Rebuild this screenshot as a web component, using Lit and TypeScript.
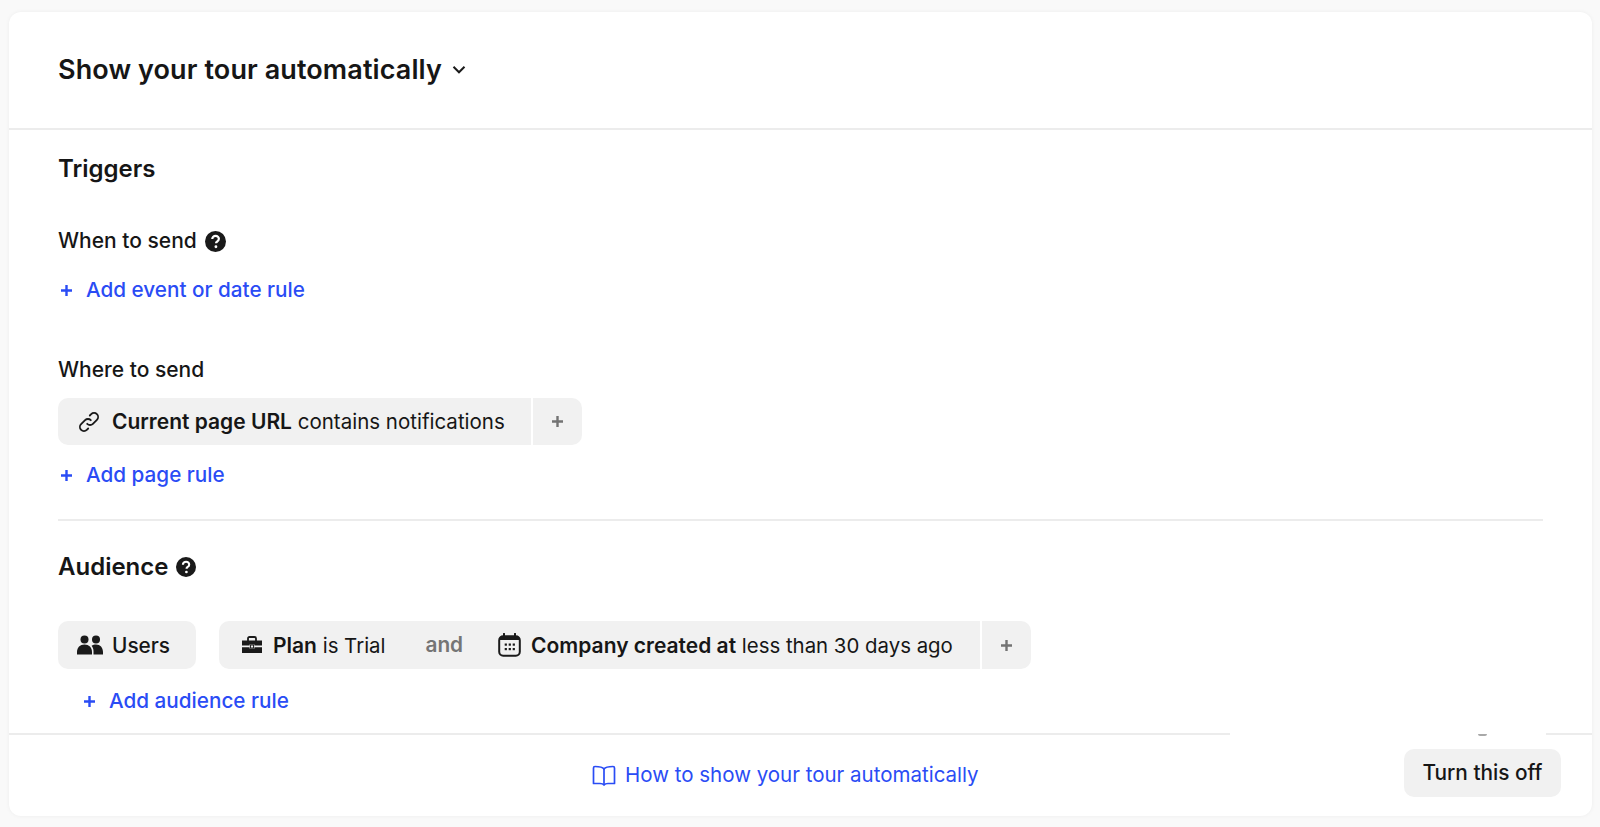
import { LitElement, html, css, svg } from "lit";
import { customElement } from "lit/decorators.js";

const help = (size: number) => html`<svg class="help" width=${size} height=${size} viewBox="0 0 20 20" aria-hidden="true">
  <circle cx="10" cy="10" r="10" fill="#1a1a1a"></circle>
  <path d="M6.900 7.700c0-1.900 1.400-3 3.200-3s3.100 1.100 3.100 2.700c0 1.200-.6 1.900-1.600 2.600-.8.500-1.100.9-1.100 1.700" fill="none" stroke="#fff" stroke-width="2.100"></path>
  <circle cx="10.400" cy="15" r="1.350" fill="#fff"></circle>
</svg>`;

const plus = html`<svg class="plus" width="13" height="13" viewBox="0 0 13 13" aria-hidden="true">
  <path d="M6.500 1v11M1 6.500h11" fill="none" stroke="currentColor" stroke-width="2.400"></path>
</svg>`;

const link = html`<svg width="24" height="24" viewBox="0 0 24 24" fill="none" stroke="#1a1a1a" stroke-width="1.800" stroke-linecap="round" aria-hidden="true">
  <path d="M10.200 13.800a4 4 0 0 0 5.700 0l4-4a4 4 0 0 0-5.700-5.700l-1.400 1.400"></path>
  <path d="M13.800 10.200a4 4 0 0 0-5.700 0l-4 4a4 4 0 0 0 5.700 5.700l1.400-1.400"></path>
</svg>`;

const users = html`<svg width="26" height="20" viewBox="0 0 26 20" fill="#1a1a1a" aria-hidden="true">
  <circle cx="7.500" cy="4.500" r="4"></circle>
  <circle cx="19" cy="4.500" r="4"></circle>
  <path d="M0 17c0-4.500 3-7.500 7.500-7.500 4.500 0 7.500 3 7.500 7.500v2.500H0z"></path>
  <path d="M16.500 19.500V16c0-2-.7-3.900-1.900-5.300 1.200-.8 2.800-1.200 4.400-1.200 4.200 0 7 3 7 7.500v2.500z"></path>
</svg>`;

const briefcase = html`<svg width="22" height="18" viewBox="0 0 22 18" aria-hidden="true">
  <path d="M7 5V2.500C7 1.600 7.600 1 8.500 1h5c.9 0 1.500.6 1.500 1.500V5" fill="none" stroke="#1a1a1a" stroke-width="1.800"></path>
  <path d="M1 4.500h20v5h-7.500V8.500h-5v1H1z" fill="#1a1a1a"></path>
  <path d="M1 11.200h7.500v1.300h5v-1.300H21V17H1z" fill="#1a1a1a"></path>
  <rect x="9.400" y="9" width="3.200" height="3" fill="none" stroke="#1a1a1a" stroke-width="1"></rect>
</svg>`;

const calendar = html`<svg width="23" height="24" viewBox="0 0 23 24" aria-hidden="true">
  <rect x="1.200" y="3.200" width="20.600" height="19.600" rx="4" fill="none" stroke="#1a1a1a" stroke-width="2"></rect>
  <path d="M1.200 7V6.500a3.500 3.500 0 0 1 3.500-3.500h13.600a3.500 3.500 0 0 1 3.500 3.500V7z" fill="#1a1a1a"></path>
  <path d="M6 .8v3.500M17 .8v3.500" stroke="#1a1a1a" stroke-width="2" stroke-linecap="round"></path>
  ${[7, 11, 15].flatMap((x) =>
    [11.5, 16].map((y) => svg`<rect x=${x - 0.3} y=${y - 1} width="2.200" height="2.200" fill="#1a1a1a"></rect>`)
  )}
</svg>`;

const book = html`<svg width="24" height="21" viewBox="0 0 24 21" fill="none" stroke="#2a4cf5" stroke-width="1.700" stroke-linejoin="round" aria-hidden="true">
  <path d="M12 4C10.500 2 8 1.500 3 1.500 2 1.500 1.500 2 1.500 3v15.500H8c2 0 3.200.4 4 1.500.8-1.100 2-1.500 4-1.500h6.500V3c0-1-.5-1.500-1.500-1.500-5 0-7.500.5-9 2.500z"></path>
  <path d="M12 4v16"></path>
</svg>`;

@customElement("app-root")
export class AppRoot extends LitElement {
  static styles = css`
    :host {
      display: block;
      height: 827px;
      box-sizing: border-box;
      padding: 12px 8px 11px 9px;
      background: #f9f9f9;
      font-family: Inter, "Noto Sans", sans-serif;
      font-size: 20.800px;
      color: #161616;
      overflow: hidden;
    }
    .card {
      position: relative;
      height: 100%;
      box-sizing: border-box;
      background: #fff;
      border-radius: 12px;
      box-shadow: 0 0 4px rgba(0, 0, 0, 0.05);
      display: flex;
      flex-direction: column;
    }
    .head {
      height: 118px;
      box-sizing: border-box;
      padding: 0 49px;
      border-bottom: 2px solid #ececec;
      display: flex;
      align-items: center;
      gap: 10px;
    }
    h1 {
      margin: 0;
      font-size: 27px;
      line-height: 32px;
      font-weight: 600;
      letter-spacing: 0.1px;
    }
    .body {
      flex: 1;
      padding: 0 49px;
    }
    h2 {
      margin: 0;
      font-size: 24px;
      line-height: 28px;
      font-weight: 600;
      display: flex;
      align-items: center;
      gap: 8px;
    }
    .triggers {
      padding-top: 25px;
    }
    h3 {
      margin: 0;
      font-size: 21px;
      line-height: 26px;
      font-weight: 500;
      display: flex;
      align-items: center;
      gap: 8px;
    }
    .when {
      margin-top: 45px;
    }
    .add {
      display: flex;
      align-items: center;
      gap: 13px;
      padding-left: 2px;
      color: #2a4cf5;
      font-size: 20.700px;
      line-height: 26px;
      font-weight: 500;
    }
    .when .add {
      margin-top: 23px;
    }
    .where {
      margin-top: 54px;
    }
    .chips {
      display: flex;
      margin-top: 15px;
    }
    .chip {
      height: 47px;
      background: #f1f1f1;
      display: flex;
      align-items: center;
      gap: 11px;
      white-space: nowrap;
      font-size: 20.500px;
      font-weight: 400;
    }
    .chip b {
      font-size: 21px;
      font-weight: 600;
    }
    .left {
      border-radius: 10px 0 0 10px;
      padding: 0 26px 0 19px;
    }
    .right {
      border-radius: 0 10px 10px 0;
      margin-left: 2px;
      width: 49px;
      justify-content: center;
      color: #737373;
    }
    .where .add {
      margin-top: 17px;
    }
    hr {
      margin: 31px 0 0;
      border: 0;
      border-top: 2px solid #ececec;
    }
    .audience {
      padding-top: 32px;
    }
    .audience-row {
      display: flex;
      margin-top: 40px;
    }
    .audience-row .chip {
      height: 48px;
    }
    .users {
      width: 138px;
      box-sizing: border-box;
      border-radius: 10px;
      padding: 0 0 0 19px;
      margin-right: 23px;
      gap: 9px;
      font-size: 20.800px;
      font-weight: 500;
    }
    .group {
      width: 761px;
      box-sizing: border-box;
      padding-left: 22px;
      padding-right: 0;
      gap: 10px;
      font-size: 20.400px;
    }
    .group .and {
      color: #757575;
      font-size: 20.800px;
      font-weight: 600;
      margin: -2px 25px 0 30px;
    }
    .audience .add {
      margin-top: 19px;
      padding-left: 25px;
    }
    .foot {
      position: relative;
      height: 83px;
      box-sizing: border-box;
      border-top: 2px solid #ececec;
      padding: 0 31px 0 49px;
      display: flex;
      align-items: center;
    }
    .guide {
      position: absolute;
      left: 583px;
      top: 27px;
      display: flex;
      align-items: center;
      gap: 9px;
      color: #2a4cf5;
      font-size: 20.500px;
      line-height: 26px;
      font-weight: 400;
    }
    .btn {
      margin-left: auto;
      height: 48px;
      width: 157px;
      border-radius: 10px;
      background: #f1f1f1;
      display: flex;
      align-items: center;
      justify-content: center;
      font-weight: 500;
      margin-bottom: 6px;
    }
    .patch {
      position: absolute;
      left: 1221px;
      top: -3px;
      width: 316px;
      height: 5px;
      background: #fff;
    }
    .patch::after {
      content: "";
      position: absolute;
      left: 248px;
      top: 2px;
      width: 9px;
      height: 2px;
      background: #a8a8a8;
      border-radius: 0 0 4px 4px;
    }
  `;

  render() {
    return html`
      <div class="card">
        <div class="head">
          <h1>Show your tour automatically</h1>
          <svg width="14" height="10" viewBox="0 0 14 10" fill="none" stroke="#1a1a1a" stroke-width="2" aria-hidden="true"><path d="M1.500 1.800 7 7.300l5.500-5.500"></path></svg>
        </div>
        <div class="body">
          <section class="triggers">
            <h2>Triggers</h2>
            <div class="when">
              <h3>When to send ${help(21)}</h3>
              <div class="add">${plus}<span>Add event or date rule</span></div>
            </div>
            <div class="where">
              <h3>Where to send</h3>
              <div class="chips">
                <div class="chip left">${link}<span><b>Current page URL</b> contains notifications</span></div>
                <div class="chip right">${plus}</div>
              </div>
              <div class="add">${plus}<span>Add page rule</span></div>
            </div>
          </section>
          <hr />
          <section class="audience">
            <h2>Audience ${help(20)}</h2>
            <div class="audience-row">
              <div class="chip users">${users}<span>Users</span></div>
              <div class="chip left group">
                ${briefcase}<span><b>Plan</b> is Trial</span>
                <span class="and">and</span>
                ${calendar}<span><b>Company created at</b> less than 30 days ago</span>
              </div>
              <div class="chip right">${plus}</div>
            </div>
            <div class="add">${plus}<span>Add audience rule</span></div>
          </section>
        </div>
        <div class="foot">
          <div class="patch"></div>
          <div class="guide">${book}<span>How to show your tour automatically</span></div>
          <div class="btn">Turn this off</div>
        </div>
      </div>
    `;
  }
}
